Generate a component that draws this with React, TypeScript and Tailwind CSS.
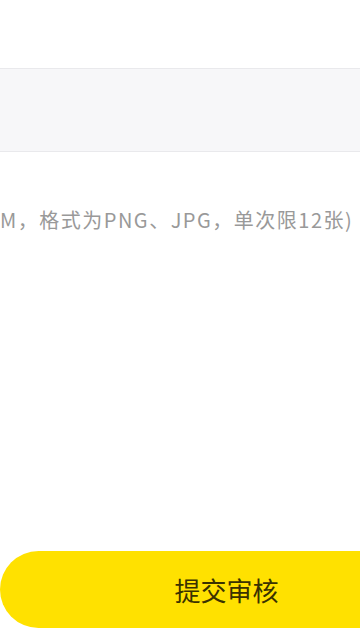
export default function App() {
  return (
    <div className="w-[360px] h-[640px] overflow-hidden bg-white flex flex-col" style={{ fontFamily: '"Noto Sans CJK SC", "Noto Sans", sans-serif' }}>
      <div className="h-[68px] shrink-0" />
      {/* input band */}
      <div className="h-[84px] shrink-0 bg-[#f7f7f9] border-y border-[#e9e9ec]" />
      {/* hint */}
      <div className="mt-[54px] h-[28px] flex items-center whitespace-nowrap text-[20px] tracking-[1.5px] text-[#999999] leading-none">
        M，格式为PNG、JPG，单次限12张)
      </div>
      <div className="flex-1" />
      {/* submit */}
      <div className="mb-[12px] flex">
        <button className="w-[453px] shrink-0 h-[77px] rounded-full bg-[#ffe100] flex items-center justify-center text-[26px] text-[#3a3200]">
          提交审核
        </button>
      </div>
    </div>
  )
}
